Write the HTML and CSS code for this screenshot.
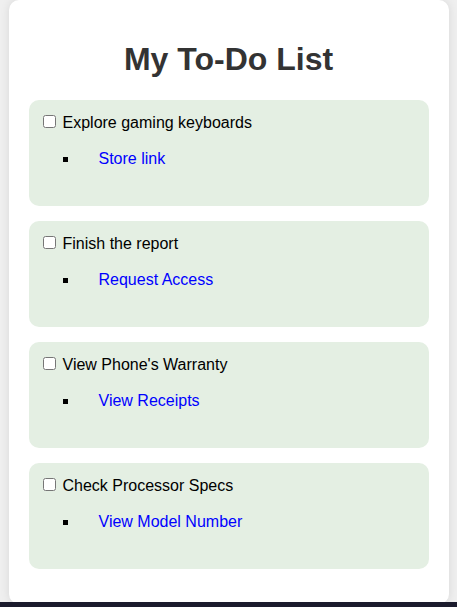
FILE: index.html
```html
<!DOCTYPE html>
<html lang="en">
<head>
<meta charset="utf-8">
<title>My To-Do List</title>
<link rel="stylesheet" href="styles.css">
</head>
<body>
<div class="container">
  <h1 class="title">My To-Do List</h1>
  <ul class="todo-list">
    <li class="todo-item">
      <label class="task-row"><input type="checkbox" class="task-check"><span class="task-text">Explore gaming keyboards</span></label>
      <ul class="sub-links"><li class="sub-link"><a href="#">Store link</a></li></ul>
    </li>
    <li class="todo-item">
      <label class="task-row"><input type="checkbox" class="task-check"><span class="task-text">Finish the report</span></label>
      <ul class="sub-links"><li class="sub-link"><a href="#">Request Access</a></li></ul>
    </li>
    <li class="todo-item">
      <label class="task-row"><input type="checkbox" class="task-check"><span class="task-text">View Phone's Warranty</span></label>
      <ul class="sub-links"><li class="sub-link"><a href="#">View Receipts</a></li></ul>
    </li>
    <li class="todo-item">
      <label class="task-row"><input type="checkbox" class="task-check"><span class="task-text">Check Processor Specs</span></label>
      <ul class="sub-links"><li class="sub-link"><a href="#">View Model Number</a></li></ul>
    </li>
  </ul>
</div>
<div class="bottom-bar"></div>
</body>
</html>
```
FILE: styles.css
```css
html, body {
  margin: 0;
  padding: 0;
}
body {
  background: #efefef;
  font-family: "Liberation Sans", Arial, sans-serif;
  font-size: 16px;
  color: #000;
}
.container {
  max-width: 400px;
  margin: 0 auto;
  padding: 20px;
  background: #fff;
  border-radius: 10px;
  box-shadow: 0 0 10px rgba(0, 0, 0, 0.1);
}
.title {
  text-align: center;
  color: #333;
  font-size: 32px;
  font-weight: bold;
  margin: 21.44px 0;
}
.todo-list {
  list-style: none;
  margin: 0;
  padding: 0;
}
.todo-item {
  background: #e4efe3;
  border-radius: 10px;
  margin-bottom: 15px;
  padding: 13.5px 15px 22.5px 10px;
}
.task-row {
  display: flex;
  align-items: center;
  gap: 4px;
  line-height: 19px;
}
.task-check {
  width: 13px;
  height: 13px;
  margin: 2px 3px 4px 4px;
}
.sub-links {
  list-style: square;
  margin: 17px 0 15px;
  padding-left: 40px;
  line-height: 19px;
}
.sub-link {
  padding-left: 20px;
}
.sub-link a {
  color: #0000ff;
  text-decoration: none;
}
.bottom-bar {
  position: fixed;
  left: 0;
  right: 0;
  bottom: 0;
  height: 5px;
  background: #1b1b2d;
}
```
